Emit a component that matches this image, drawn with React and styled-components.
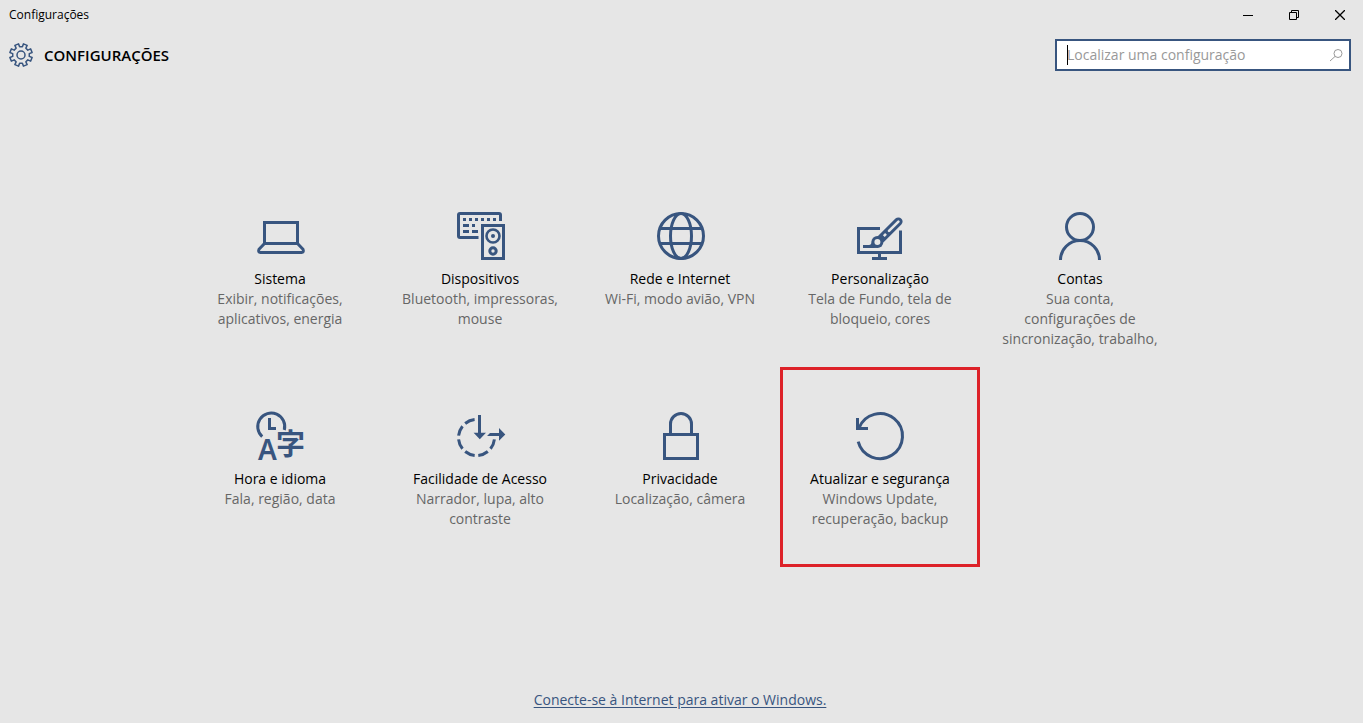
import React from 'react';
import styled, { createGlobalStyle } from 'styled-components';

const accent = '#38557f';
const pageBg = '#e6e6e6';
const mutedText = '#666666';
const highlight = '#dd2229';

const GlobalStyle = createGlobalStyle`
  * {
    box-sizing: border-box;
  }

  body {
    margin: 0;
    background: ${pageBg};
    color: #000;
    font-family: "Segoe UI", "Open Sans", "Noto Sans", sans-serif;
    font-size: 14px;
    line-height: 20px;
  }
`;

const Window = styled.div`
  display: flex;
  flex-direction: column;
  min-height: 100vh;
`;

const TitleBar = styled.div`
  display: flex;
  align-items: center;
  justify-content: space-between;
  height: 30px;
  padding-left: 9px;
  font-size: 12px;
`;

const WindowControls = styled.div`
  display: flex;
`;

const ControlButton = styled.button`
  display: flex;
  align-items: center;
  justify-content: center;
  width: 46px;
  height: 30px;
  padding: 0;
  border: none;
  background: none;
  color: #000;

  &:hover {
    background: #d0d0d0;
  }
`;

const Header = styled.header`
  display: flex;
  align-items: center;
  justify-content: space-between;
  gap: 16px;
  height: 50px;
  padding: 0 12px 0 9px;
`;

const Heading = styled.div`
  display: flex;
  align-items: center;
  gap: 11px;
  color: ${accent};

  h1 {
    margin: 0;
    color: #000;
    font-size: 15px;
    font-weight: 600;
  }
`;

const SearchBox = styled.label`
  position: relative;
  display: flex;
  align-items: center;
  width: 296px;
  height: 32px;
  padding: 0 6px 0 10px;
  border: 2px solid ${accent};
  background: #fff;
  color: #999;
`;

const SearchInput = styled.input`
  flex: 1;
  min-width: 0;
  padding: 0;
  border: none;
  outline: none;
  background: none;
  font: inherit;
  caret-color: transparent;

  &::placeholder {
    color: #999;
    opacity: 1;
  }
`;

const Caret = styled.span`
  position: absolute;
  left: 10px;
  top: 4px;
  width: 1px;
  height: 20px;
  background: #000;
`;

const Tiles = styled.main`
  display: grid;
  grid-template-columns: repeat(auto-fit, 200px);
  grid-auto-rows: 200px;
  justify-content: center;
  padding: 87px 3px 24px 0;
  width: 100%;
  max-width: 1003px;
  margin: 0 auto;
`;

const TileLink = styled.a`
  display: flex;
  flex-direction: column;
  align-items: center;
  padding: 45px 20px 0;
  color: ${mutedText};
  text-align: center;
  text-decoration: none;
  outline: ${({ $marked }) => $marked ? `3px solid ${highlight}` : 'none'};
  outline-offset: -3px;
`;

const TileIcon = styled.svg`
  display: block;
  width: 50px;
  height: 48px;
  margin-bottom: 9px;
  fill: none;
  stroke: ${accent};
  stroke-width: 3;
  overflow: visible;

  .solid {
    fill: ${accent};
    stroke: none;
  }

  .cut {
    stroke: ${pageBg};
  }

  text {
    font-family: "Noto Sans", sans-serif;
    font-weight: 600;
  }

  .kanji {
    font-family: "Noto Sans CJK JP", sans-serif;
    font-weight: 700;
  }
`;

const TileTitle = styled.span`
  color: #000;
  white-space: nowrap;
`;

const Footer = styled.footer`
  display: flex;
  justify-content: center;
  margin-top: auto;
  padding: 0 3px 13px 0;
`;

const ActivateLink = styled.a`
  color: ${accent};
  text-decoration: underline;
  text-underline-offset: 2px;
`;

// eight teeth, starting half a step off vertical
const gearPath = () => {
  const points = [];
  for (let i = 0; i < 8; i++) {
    const mid = 22.5 + i * 45;
    [[-13, 8.4], [-10, 11.4], [10, 11.4], [13, 8.4]].forEach(([offset, r]) => {
      const a = ((mid + offset) * Math.PI) / 180;
      points.push(`${(12 + r * Math.sin(a)).toFixed(2)} ${(12 - r * Math.cos(a)).toFixed(2)}`);
    });
  }
  return `M${points.join('L')}Z`;
};

const GearIcon = () => (
  <svg width="24" height="24" viewBox="0 0 24 24" fill="none" stroke="currentColor" strokeWidth="1.5" strokeLinejoin="round" aria-hidden="true">
    <path d={gearPath()} />
    <circle cx="12" cy="12" r="4" />
  </svg>
);

const SearchIcon = () => (
  <svg width="14" height="14" viewBox="0 0 14 14" fill="none" stroke="currentColor" aria-hidden="true">
    <circle cx="9" cy="5.5" r="4" />
    <path d="M6.1 8.4L1 13" />
  </svg>
);

const icons = {
  system: (
    <>
      <path d="M9.5 31.5V10.5H42.5V31.5Z" />
      <path d="M9.5 31.5L4 37.3Q2.8 40.5 5.5 40.5H46.5Q49.2 40.5 48 37.3L42.5 31.5" />
    </>
  ),
  devices: (
    <>
      <path d="M23.5 25.5H5A1.5 1.5 0 0 1 3.5 24V3A1.5 1.5 0 0 1 5 1.5H44A1.5 1.5 0 0 1 45.5 3V9" />
      <path d="M8 7.5H41" strokeDasharray="3 3" />
      <path d="M8 13.5h6M17 13.5h3M8 19.5h6M17 19.5h6" />
      <rect x="27.5" y="13.5" width="21" height="33" />
      <circle cx="38" cy="24" r="6.5" strokeWidth="2.6" />
      <circle className="solid" cx="38" cy="24" r="2" />
      <circle cx="38" cy="39" r="3.2" />
    </>
  ),
  network: (
    <>
      <circle cx="26" cy="24" r="22.5" />
      <ellipse cx="26" cy="24" rx="10.5" ry="22.5" />
      <path d="M5 16.5H47M5 31.5H47" />
    </>
  ),
  personalization: (
    <>
      <path d="M25 16.5H3.5V40.5H45.5V18.5" />
      <path d="M24.5 41V46M17 46.5H32" />
      <path d="M43.5 9.5L28 25" strokeWidth="12" className="cut" />
      <path d="M43.4 9.6L26.4 26.4" strokeWidth="8.4" strokeLinecap="round" />
      <path d="M43.4 9.6L34 18.9" strokeWidth="2.6" strokeLinecap="round" className="cut" />
      <path d="M31 21.9L28.8 24.1" strokeWidth="2.6" className="cut" />
      <path className="solid" d="M8 33H14Q16.5 33 17 29L24 35Q22 36 19 36H8Z" />
      <circle className="solid" cx="22.4" cy="30" r="6" />
      <circle cx="22.4" cy="30" r="1.5" className="cut" />
    </>
  ),
  accounts: (
    <>
      <circle cx="25" cy="15" r="13.5" />
      <path d="M5.5 48A19.5 19.5 0 0 1 44.5 48" />
    </>
  ),
  language: (
    <>
      <path d="M7.2 24.6A13.5 13.5 0 1 1 29.3 18" />
      <path d="M14.5 6V16.5H21" />
      <text className="solid" x="3" y="48" fontSize="28">A</text>
      <text className="solid kanji" x="21" y="43" fontSize="29">字</text>
    </>
  ),
  access: (
    <>
      <path d="M39.4 27.4A18 18 0 1 1 19.6 7.6" pathLength="258" strokeDasharray="33 12" />
      <path d="M24.5 3V22" />
      <path className="solid" d="M18.6 20.7H31L24.8 27.3ZM44 16L50.3 22.4L44 28.8ZM35 21H45V24H32Z" />
    </>
  ),
  privacy: (
    <>
      <rect x="9.5" y="22.5" width="33" height="24" />
      <path d="M15.5 22V12A10.5 10.5 0 0 1 36.5 12V22" />
    </>
  ),
  update: (
    <>
      <path d="M4 16A22.5 22.5 0 1 1 3.2 29.7" />
      <path d="M2.5 6V16.5H13" />
    </>
  ),
};

const categories = [
  { id: 'system', title: 'Sistema', description: 'Exibir, notificações, aplicativos, energia' },
  { id: 'devices', title: 'Dispositivos', description: 'Bluetooth, impressoras, mouse' },
  { id: 'network', title: 'Rede e Internet', description: 'Wi-Fi, modo avião, VPN' },
  { id: 'personalization', title: 'Personalização', description: 'Tela de Fundo, tela de bloqueio, cores' },
  { id: 'accounts', title: 'Contas', description: 'Sua conta, configurações de sincronização, trabalho,' },
  { id: 'language', title: 'Hora e idioma', description: 'Fala, região, data' },
  { id: 'access', title: 'Facilidade de Acesso', description: 'Narrador, lupa, alto contraste' },
  { id: 'privacy', title: 'Privacidade', description: 'Localização, câmera' },
  { id: 'update', title: 'Atualizar e segurança', description: 'Windows Update, recuperação, backup', marked: true },
];

const Tile = ({ id, title, description, marked }) => (
  <TileLink href={`#${id}`} $marked={marked}>
    <TileIcon viewBox="0 0 50 48" aria-hidden="true">{icons[id]}</TileIcon>
    <TileTitle>{title}</TileTitle>
    <span>{description}</span>
  </TileLink>
);

const App = () => (
  <Window>
    <GlobalStyle />
    <TitleBar>
      <span>Configurações</span>
      <WindowControls>
        <ControlButton aria-label="Minimizar">
          <svg width="10" height="10" stroke="currentColor"><path d="M0 5.5H10" /></svg>
        </ControlButton>
        <ControlButton aria-label="Restaurar">
          <svg width="10" height="10" fill="none" stroke="currentColor"><path d="M.5 2.5H7.5V9.5H.5ZM2.5 2.5V.5H9.5V7.5H7.5" /></svg>
        </ControlButton>
        <ControlButton aria-label="Fechar">
          <svg width="10" height="10" stroke="currentColor" strokeWidth="1.3"><path d="M0 0L10 10M10 0L0 10" /></svg>
        </ControlButton>
      </WindowControls>
    </TitleBar>
    <Header>
      <Heading>
        <GearIcon />
        <h1>CONFIGURAÇÕES</h1>
      </Heading>
      <SearchBox>
        <SearchInput type="text" aria-label="Localizar uma configuração" placeholder="Localizar uma configuração" />
        <Caret />
        <SearchIcon />
      </SearchBox>
    </Header>
    <Tiles>
      {categories.map((category) => <Tile key={category.id} {...category} />)}
    </Tiles>
    <Footer>
      <ActivateLink href="#ativar">Conecte-se à Internet para ativar o Windows.</ActivateLink>
    </Footer>
  </Window>
);

export default App;
